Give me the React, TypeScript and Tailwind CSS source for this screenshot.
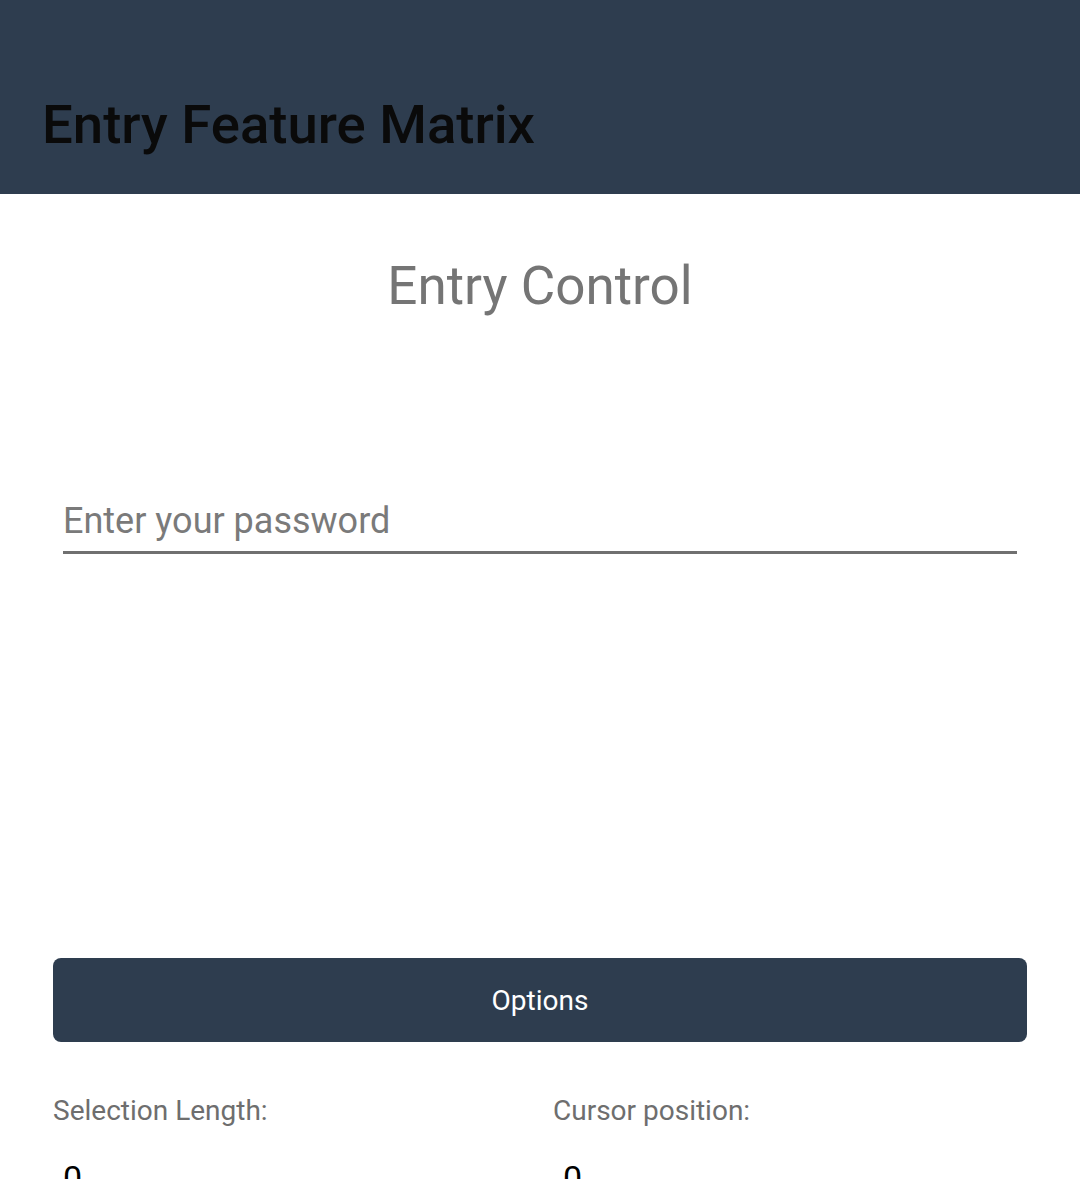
import React from "react";

const App = () => {
  return (
    <div className="flex h-[1179px] w-full flex-col overflow-hidden bg-white font-['Roboto',sans-serif]">
      <div className="flex h-[194px] w-full shrink-0 items-end bg-[#2e3d4f] px-[42px] pb-[43px]">
        <h1 className="text-[54.5px] font-medium leading-none text-[#0a0a0a]">
          Entry Feature Matrix
        </h1>
      </div>
      <div className="flex shrink-0 flex-col px-[53px]">
        <div className="pt-[66px] text-center text-[53px] leading-none text-[#757575]">
          Entry Control
        </div>
        <div className="mx-[10px] mt-[190px] flex h-[51px] items-start border-b-[3px] border-[#707070]">
          <span className="text-[36px] leading-none text-[#7a7a7a]">
            Enter your password
          </span>
        </div>
        <button className="mt-[404px] flex h-[84px] w-full items-center justify-center rounded-lg bg-[#2e3d4f] pt-[2px] text-[28px] text-white">
          Options
        </button>
        <div className="mt-[55px] grid grid-cols-2 gap-[26px]">
          <div className="flex flex-col">
            <span className="text-[28px] leading-none text-[#6e6e6e]">
              Selection Length:
            </span>
            <span className="ml-[10px] mt-[36px] text-[34px] leading-none text-black">
              0
            </span>
          </div>
          <div className="flex flex-col">
            <span className="text-[28px] leading-none text-[#6e6e6e]">
              Cursor position:
            </span>
            <span className="ml-[10px] mt-[36px] text-[34px] leading-none text-black">
              0
            </span>
          </div>
        </div>
      </div>
    </div>
  );
};

export default App;
